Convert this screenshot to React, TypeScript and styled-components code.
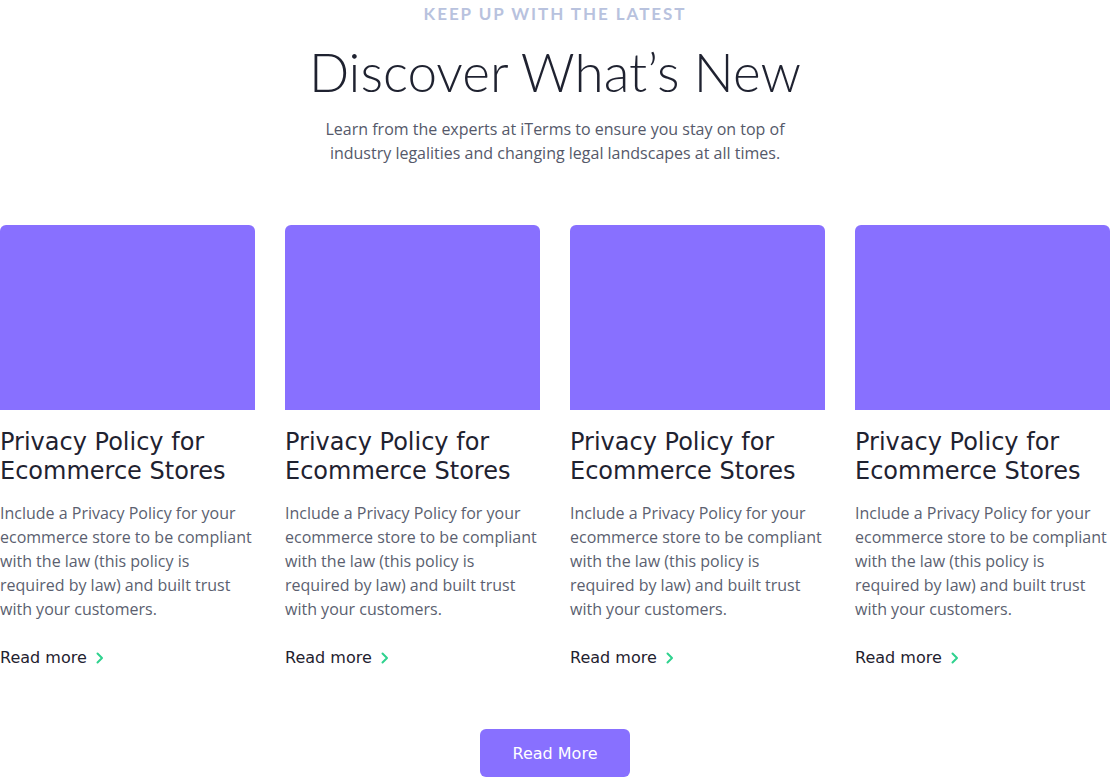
import React from "react";
import styled, { createGlobalStyle } from "styled-components";

const Global = createGlobalStyle`
  html, body { margin: 0; padding: 0; background: #ffffff; }
  * { box-sizing: border-box; }
`;

const Section = styled.section`
  width: 1110px;
  padding-top: 2px;
  display: flex;
  flex-direction: column;
  align-items: center;
`;

const Eyebrow = styled.div`
  font-family: "Lato", sans-serif;
  font-size: 17px;
  font-weight: 700;
  letter-spacing: 1.95px;
  line-height: 24px;
  color: #b8c2de;
  text-transform: uppercase;
`;

const Title = styled.h1`
  margin: 16px 0 0;
  font-family: "Lato", sans-serif;
  font-weight: 300;
  font-size: 53px;
  line-height: 60px;
  color: #1f2230;
`;

const Lead = styled.p`
  margin: 15px 0 0;
  width: 500px;
  text-align: center;
  font-family: "Open Sans", sans-serif;
  font-size: 16px;
  line-height: 24px;
  color: #55596a;
`;

const Grid = styled.div`
  margin-top: 60px;
  width: 100%;
  display: grid;
  grid-template-columns: repeat(4, 255px);
  column-gap: 30px;
`;

const Card = styled.article`
  display: flex;
  flex-direction: column;
`;

const Thumb = styled.div`
  height: 185px;
  background: #8870ff;
  border-radius: 6px 6px 0 0;
`;

const CardTitle = styled.h3`
  margin: 18px 0 0;
  font-family: "DejaVu Sans", sans-serif;
  font-weight: 400;
  font-size: 24px;
  line-height: 29px;
  color: #1f2230;
`;

const CardText = styled.p`
  margin: 15px 0 0;
  font-family: "Open Sans", sans-serif;
  font-size: 16px;
  line-height: 24px;
  color: #5b5f70;
`;

const MoreLink = styled.a`
  margin-top: 25px;
  display: flex;
  align-items: center;
  gap: 9px;
  font-family: "DejaVu Sans", sans-serif;
  font-size: 16px;
  line-height: 24px;
  color: #1f2230;
  text-decoration: none;
`;

const Button = styled.button`
  margin-top: 59px;
  width: 150px;
  height: 48px;
  border: none;
  border-radius: 6px;
  background: #8870ff;
  color: #ffffff;
  font-family: "DejaVu Sans", sans-serif;
  font-size: 16px;
`;

const Chevron = () => (
  <svg width="8" height="12" viewBox="0 0 8 12" fill="none">
    <path d="M1.5 1.5L6 6l-4.5 4.5" stroke="#2fd28e" strokeWidth="2" strokeLinecap="round" strokeLinejoin="round" />
  </svg>
);

const cards = [0, 1, 2, 3];

export default function App() {
  return (
    <>
      <Global />
      <Section>
        <Eyebrow>Keep up with the latest</Eyebrow>
        <Title>Discover What’s New</Title>
        <Lead>
          Learn from the experts at iTerms to ensure you stay on top of industry legalities and changing legal landscapes at all times.
        </Lead>
        <Grid>
          {cards.map((i) => (
            <Card key={i}>
              <Thumb />
              <CardTitle>
                Privacy Policy for
                <br />
                Ecommerce Stores
              </CardTitle>
              <CardText>
                Include a Privacy Policy for your ecommerce store to be compliant with the law (this policy is required by law) and built trust with your customers.
              </CardText>
              <MoreLink href="#">
                Read more <Chevron />
              </MoreLink>
            </Card>
          ))}
        </Grid>
        <Button>Read More</Button>
      </Section>
    </>
  );
}
